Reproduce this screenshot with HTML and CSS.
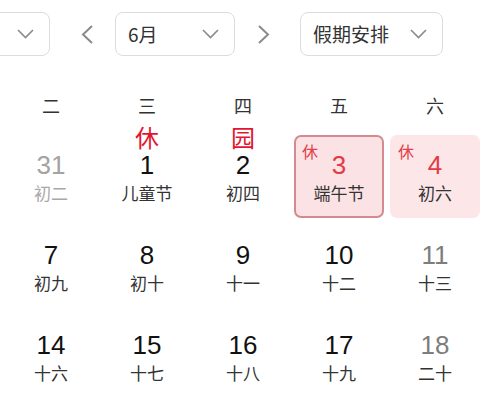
FILE: index.html
```html
<!DOCTYPE html>
<html lang="zh-CN">
<head>
<meta charset="utf-8">
<title>日历</title>
<link rel="stylesheet" href="styles.css">
</head>
<body>
<div class="page">
  <div class="toolbar">
    <div class="select select-year">
      <span class="select-text">2023年</span>
      <svg class="chev" width="17" height="10" viewBox="0 0 17 10"><polyline points="1,1 8.5,8.5 16,1" fill="none" stroke="#8a8a8a" stroke-width="1.6"/></svg>
    </div>
    <div class="nav nav-prev">
      <svg width="12" height="19" viewBox="0 0 12 19"><polyline points="11,1 2,9.5 11,18" fill="none" stroke="#8a8a8a" stroke-width="2"/></svg>
    </div>
    <div class="select select-month">
      <span class="select-text">6月</span>
      <svg class="chev" width="17" height="10" viewBox="0 0 17 10"><polyline points="1,1 8.5,8.5 16,1" fill="none" stroke="#8a8a8a" stroke-width="1.6"/></svg>
    </div>
    <div class="nav nav-next">
      <svg width="12" height="19" viewBox="0 0 12 19"><polyline points="1,1 10,9.5 1,18" fill="none" stroke="#8a8a8a" stroke-width="2"/></svg>
    </div>
    <div class="select select-holiday">
      <span class="select-text">假期安排</span>
      <svg class="chev" width="17" height="10" viewBox="0 0 17 10"><polyline points="1,1 8.5,8.5 16,1" fill="none" stroke="#8a8a8a" stroke-width="1.6"/></svg>
    </div>
  </div>

  <div class="calendar">
    <div class="weekdays">
      <div class="wd">二</div>
      <div class="wd">三</div>
      <div class="wd">四</div>
      <div class="wd">五</div>
      <div class="wd">六</div>
    </div>
    <div class="grid">
      <div class="cell"><div class="day"><div class="num muted">31</div><div class="lunar muted">初二</div></div></div>
      <div class="cell"><span class="mark">休</span><div class="day"><div class="num">1</div><div class="lunar">儿童节</div></div></div>
      <div class="cell"><span class="mark">园</span><div class="day"><div class="num">2</div><div class="lunar">初四</div></div></div>
      <div class="cell"><div class="day rest selected"><span class="tag">休</span><div class="num red">3</div><div class="lunar">端午节</div></div></div>
      <div class="cell"><div class="day rest"><span class="tag">休</span><div class="num red">4</div><div class="lunar">初六</div></div></div>

      <div class="cell"><div class="day"><div class="num">7</div><div class="lunar">初九</div></div></div>
      <div class="cell"><div class="day"><div class="num">8</div><div class="lunar">初十</div></div></div>
      <div class="cell"><div class="day"><div class="num">9</div><div class="lunar">十一</div></div></div>
      <div class="cell"><div class="day"><div class="num">10</div><div class="lunar">十二</div></div></div>
      <div class="cell"><div class="day"><div class="num weekend">11</div><div class="lunar">十三</div></div></div>

      <div class="cell"><div class="day"><div class="num">14</div><div class="lunar">十六</div></div></div>
      <div class="cell"><div class="day"><div class="num">15</div><div class="lunar">十七</div></div></div>
      <div class="cell"><div class="day"><div class="num">16</div><div class="lunar">十八</div></div></div>
      <div class="cell"><div class="day"><div class="num">17</div><div class="lunar">十九</div></div></div>
      <div class="cell"><div class="day"><div class="num weekend">18</div><div class="lunar">二十</div></div></div>
    </div>
  </div>
</div>
</body>
</html>
```

FILE: styles.css
```css
html, body {
  margin: 0;
  padding: 0;
  background: #ffffff;
  overflow: hidden;
}

body {
  width: 480px;
  height: 412px;
  font-family: "Liberation Sans", "Noto Sans CJK SC", sans-serif;
  color: #333333;
}

.page {
  width: 480px;
  height: 412px;
  overflow: hidden;
}

.toolbar {
  display: flex;
  align-items: center;
  padding-top: 12px;
  margin-left: -70px;
  height: 44px;
}

.select {
  box-sizing: border-box;
  height: 44px;
  border: 1px solid #dcdcdc;
  border-radius: 8px;
  background: #ffffff;
  display: flex;
  align-items: center;
  justify-content: space-between;
  padding: 0 15px 0 12px;
  flex: none;
}

.select-text {
  font-size: 19px;
  color: #333333;
  font-family: "Noto Sans CJK SC", "Liberation Sans", sans-serif;
  line-height: 24px;
}

.chev {
  display: block;
  flex: none;
}

.select-year {
  width: 120px;
}

.select-year .select-text {
  visibility: hidden;
}

.select-month {
  width: 120px;
}

.select-holiday {
  width: 143px;
}

.nav {
  width: 40px;
  height: 44px;
  display: flex;
  align-items: center;
  justify-content: center;
  flex: none;
}

.nav-prev {
  margin: 0 8px 0 17px;
}

.nav-next {
  margin: 0 16px 0 9px;
}

.calendar {
  margin-left: 3px;
  margin-top: 34px;
  width: 480px;
}

.weekdays {
  display: grid;
  grid-template-columns: repeat(5, 96px);
  height: 30px;
  align-items: center;
}

.wd {
  text-align: center;
  font-size: 18px;
  line-height: 30px;
  color: #333333;
  font-family: "Noto Sans CJK SC", sans-serif;
}

.grid {
  margin-top: 11px;
  display: grid;
  grid-template-columns: repeat(5, 96px);
  grid-auto-rows: 90px;
}

.cell {
  position: relative;
}

.mark {
  position: absolute;
  top: -5px;
  left: 0;
  right: 0;
  text-align: center;
  font-size: 24px;
  line-height: 22px;
  color: #e3152f;
  font-family: "Noto Sans CJK SC", sans-serif;
}

.day {
  position: relative;
  box-sizing: border-box;
  margin: 4px 3px 0 3px;
  height: 83px;
  border: 2px solid transparent;
  border-radius: 7px;
  padding-top: 15px;
  text-align: center;
}

.num {
  font-size: 26px;
  line-height: 26px;
  color: #111111;
}

.lunar {
  margin-top: 4px;
  font-size: 17px;
  line-height: 22px;
  color: #333333;
  font-family: "Noto Sans CJK SC", sans-serif;
}

.num.muted {
  color: #a3a3a3;
}

.lunar.muted {
  color: #a8a8a8;
}

.num.weekend {
  color: #7d7d7d;
}

.num.red {
  color: #e23a46;
}

.rest {
  background: #fce6e8;
}

.rest.selected {
  background: #fbe2e4;
  border-color: #d48a8f;
}

.tag {
  position: absolute;
  top: 5px;
  left: 6px;
  font-size: 16px;
  line-height: 18px;
  color: #e2404a;
  font-family: "Noto Sans CJK SC", sans-serif;
}
```
